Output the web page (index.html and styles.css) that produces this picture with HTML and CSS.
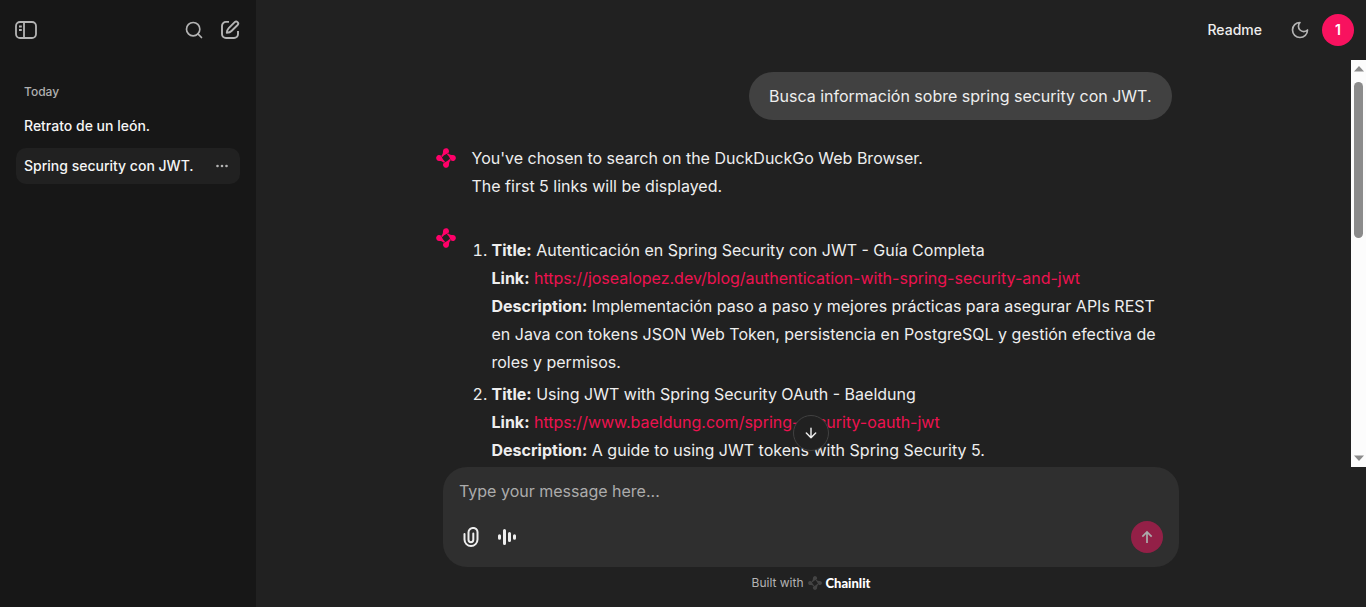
FILE: index.html
```html
<!DOCTYPE html>
<html lang="es">
<head>
<meta charset="utf-8">
<meta name="viewport" content="width=device-width, initial-scale=1">
<title>Chainlit</title>
<link rel="stylesheet" href="styles.css">
</head>
<body>
<svg class="defs" aria-hidden="true">
  <symbol id="logo" viewBox="0 0 20 20">
    <g id="petal"><path d="M7 3.200a3 3 0 1 1 5.300 1.900C10.800 6.300 8.500 6.400 6.500 9L5.200 8C6.700 6.300 7 5 7 3.200z"/></g>
    <use href="#petal" transform="rotate(90 10 10)"/>
    <use href="#petal" transform="rotate(180 10 10)"/>
    <use href="#petal" transform="rotate(270 10 10)"/>
  </symbol>
</svg>
<div class="app">
  <aside class="sidebar">
    <div class="sidebar-head">
      <button class="icon-btn" aria-label="Toggle sidebar">
        <svg width="22" height="18" viewBox="0 0 22 18" fill="none" stroke="currentColor" stroke-width="1.800"><rect x="1" y="1" width="20" height="16" rx="4"/><path d="M9 1v16M4 5.500h2.800M4 9h2.800"/></svg>
      </button>
      <div class="head-tools">
        <button class="icon-btn" aria-label="Search">
          <svg width="20" height="20" viewBox="0 0 24 24" fill="none" stroke="currentColor" stroke-width="2" stroke-linecap="round"><circle cx="11" cy="11" r="8"/><path d="m21 21-4.300-4.300"/></svg>
        </button>
        <button class="icon-btn" aria-label="New chat">
          <svg width="20" height="20" viewBox="0 0 20 20" fill="none" stroke="currentColor" stroke-width="1.900" stroke-linejoin="round"><path d="M9 1.900H6a4 4 0 0 0-4 4V14a4 4 0 0 0 4 4h8a4 4 0 0 0 4-4v-3"/><path d="M14.700 2.200a1.950 1.950 0 0 1 2.900 2.800L11.500 11c-1 1-2.500 1.600-4.700 1.900.2-2.200.9-3.700 1.900-4.700z"/></svg>
        </button>
      </div>
    </div>
    <nav class="threads">
      <h2 class="threads-title">Today</h2>
      <div class="thread"><a class="thread-link" href="#">Retrato de un león.</a></div>
      <div class="thread thread-active">
        <a class="thread-link" href="#">Spring security con JWT.</a>
        <button class="more-btn" aria-label="Thread options">
          <svg width="14" height="4" viewBox="0 0 14 4" fill="currentColor"><circle cx="2.500" cy="2" r="1.300"/><circle cx="7" cy="2" r="1.300"/><circle cx="11.500" cy="2" r="1.300"/></svg>
        </button>
      </div>
    </nav>
  </aside>
  <main class="main">
    <header class="topbar">
      <button class="readme">Readme</button>
      <button class="icon-btn" aria-label="Theme">
        <svg width="20" height="20" viewBox="0 0 24 24" fill="none" stroke="currentColor" stroke-width="2" stroke-linejoin="round"><path d="M12 3a6 6 0 0 0 9 9 9 9 0 1 1-9-9Z"/></svg>
      </button>
      <button class="avatar">1</button>
    </header>
    <section class="scroller">
      <div class="scroll-view">
        <div class="column messages">
          <p class="bubble">Busca información sobre spring security con JWT.</p>
          <article class="message">
            <svg class="logo"><use href="#logo"/></svg>
            <p class="text">You've chosen to search on the DuckDuckGo Web Browser.<br>The first 5 links will be displayed.</p>
          </article>
          <article class="message">
            <svg class="logo"><use href="#logo"/></svg>
            <ol class="results">
              <li><strong>Title:</strong> Autenticación en Spring Security con JWT - Guía Completa<br>
                <strong>Link:</strong> <a href="#">https://josealopez.dev/blog/authentication-with-spring-security-and-jwt</a><br>
                <strong>Description:</strong> Implementación paso a paso y mejores prácticas para asegurar APIs REST en Java con tokens JSON Web Token, persistencia en PostgreSQL y gestión efectiva de roles y permisos.</li>
              <li><strong>Title:</strong> Using JWT with Spring Security OAuth - Baeldung<br>
                <strong>Link:</strong> <a href="#">https://www.baeldung.com/spring-security-oauth-jwt</a><br>
                <strong>Description:</strong> A guide to using JWT tokens with Spring Security 5.</li>
            </ol>
          </article>
        </div>
      </div>
      <div class="scrollbar" aria-hidden="true">
        <svg width="10" height="6" viewBox="0 0 10 6" fill="#8b8b8b"><path d="M5 0 10 5.500H0z"/></svg>
        <div class="track"><div class="thumb"></div></div>
        <svg width="10" height="6" viewBox="0 0 10 6" fill="#8b8b8b"><path d="M0 .5h10L5 6z"/></svg>
      </div>
    </section>
    <div class="column dock">
      <button class="jump" aria-label="Scroll to bottom">
        <svg width="16" height="16" viewBox="0 0 24 24" fill="none" stroke="currentColor" stroke-width="2.200" stroke-linecap="round" stroke-linejoin="round"><path d="M12 5v14M19 12l-7 7-7-7"/></svg>
      </button>
      <form class="composer">
        <textarea class="input" rows="1" placeholder="Type your message here..." aria-label="Message"></textarea>
        <div class="actions">
          <button type="button" class="action" aria-label="Attach file">
            <svg width="16" height="20" viewBox="0 0 16 20" fill="none" stroke="currentColor" stroke-width="2" stroke-linecap="round"><path d="M1.500 7v5.500a6.500 6.500 0 0 0 13 0V5a4 4 0 0 0-4.500-4A4.300 4.300 0 0 0 5.500 5.200v7.600a2.400 2.400 0 0 0 4.800 0V6.500"/></svg>
          </button>
          <button type="button" class="action" aria-label="Voice">
            <svg width="20" height="18" viewBox="0 0 20 18" fill="none" stroke="currentColor" stroke-width="3" stroke-linecap="round"><path d="M2.500 7.800v2.400M7.500 2.500v13M12.500 5.500v7M17.500 7.800v2.400"/></svg>
          </button>
          <button type="submit" class="send" aria-label="Send" disabled>
            <svg width="16" height="16" viewBox="0 0 24 24" fill="none" stroke="currentColor" stroke-width="2.600" stroke-linejoin="miter"><path d="M12 21V5M5 11.500l7-7 7 7"/></svg>
          </button>
        </div>
      </form>
      <a class="credit" href="#"><span>Built with</span><svg class="credit-logo"><use href="#logo"/></svg><strong class="brand">Chainlit</strong></a>
    </div>
  </main>
</div>
</body>
</html>
```
FILE: styles.css
```css
* { box-sizing: border-box; }
body {
  margin: 0;
  background: #212121;
  color: #eeeeee;
  font: 16px/28px Inter, "Liberation Sans", sans-serif;
}
button { margin: 0; padding: 0; border: 0; background: none; color: inherit; font: inherit; }
svg { display: block; flex: none; }
p, h2, ol { margin: 0; padding: 0; }
a { text-decoration: none; }
.defs { position: absolute; width: 0; height: 0; }
.app { display: flex; height: 100vh; }

.sidebar { flex: none; width: 256px; background: #171717; }
.sidebar-head { display: flex; justify-content: space-between; align-items: center; height: 60px; padding: 0 8px; }
.head-tools { display: flex; }
.icon-btn { display: grid; place-items: center; width: 36px; height: 36px; color: #b4b4b4; }
.threads { display: flex; flex-direction: column; gap: 4px; padding: 16px; font-size: 14px; line-height: 20px; }
.threads-title { padding: 0 8px; font-size: 12px; font-weight: 500; line-height: 32px; color: #b0b0b0; margin-bottom: -4px; }
.thread { display: flex; align-items: center; height: 36px; padding-left: 8px; border-radius: 10px; }
.thread-active { background: #212121; }
.thread-link { flex: 1; color: #f5f5f5; font-weight: 500; }
.more-btn { display: grid; place-items: center; width: 36px; height: 36px; color: #b4b4b4; }

.main { flex: 1; min-width: 0; display: flex; flex-direction: column; }
.topbar { flex: none; display: flex; justify-content: flex-end; align-items: center; height: 60px; padding-right: 12px; }
.readme { margin-right: 20px; font-size: 14px; font-weight: 500; }
.avatar { width: 32px; height: 32px; margin-left: 4px; border-radius: 50%; background: #f8125f; color: #fff; font-size: 14px; font-weight: 600; }
.scroller { flex: 1; min-height: 0; display: flex; }
.scroll-view { flex: 1; min-width: 0; overflow: hidden; }
.column { width: 100%; max-width: 768px; margin: 0 auto; padding: 0 16px; }
.messages { display: flex; flex-direction: column; padding-top: 12px; }
.bubble { align-self: flex-end; padding: 10px 20px; border-radius: 24px; background: #414141; }
.message { display: flex; gap: 16px; margin-top: 24px; }
.message + .message { margin-top: 36px; }
.logo { width: 20px; height: 20px; margin-top: 4px; fill: #ff0069; }
.message + .message .logo { margin-top: -8px; }
.results { display: flex; flex-direction: column; gap: 4px; padding-left: 20px; }
.results strong { font-weight: 700; }
.results a { color: #ed1250; }
.scrollbar { display: flex; flex-direction: column; align-items: center; width: 15px; padding: 6px 0; background: #fcfcfc; }
.track { flex: 1; width: 9px; padding: 10px 0; }
.thumb { height: 43%; border-radius: 5px; background: #8b8b8b; }

.dock { position: relative; flex: none; }
.jump { position: absolute; top: -52px; left: 50%; margin-left: -18px; display: grid; place-items: center; width: 36px; height: 36px; border: 1px solid #414141; border-radius: 50%; background: #212121; }
.composer { padding: 12px 16px; border-radius: 24px; background: #2f2f2f; }
.input { display: block; width: 100%; height: 24px; margin: 0 0 16px; padding: 0; border: 0; outline: 0; resize: none; overflow: hidden; background: none; color: inherit; font: inherit; line-height: 24px; }
.input::placeholder { color: #acacac; opacity: 1; }
.actions { display: flex; align-items: center; margin-left: -6px; }
.action { display: grid; place-items: center; width: 36px; height: 36px; }
.send { display: grid; place-items: center; width: 32px; height: 32px; margin-left: auto; border-radius: 50%; background: #932047; color: #ababab; }
.credit { display: flex; justify-content: center; align-items: center; gap: 4px; height: 40px; padding-bottom: 8px; color: #b4b4b4; font-size: 12px; line-height: 16px; }
.credit-logo { width: 14px; height: 14px; fill: #444444; }
.brand { color: #ffffff; font-family: Lato, sans-serif; font-size: 13px; font-weight: 900; }
```
